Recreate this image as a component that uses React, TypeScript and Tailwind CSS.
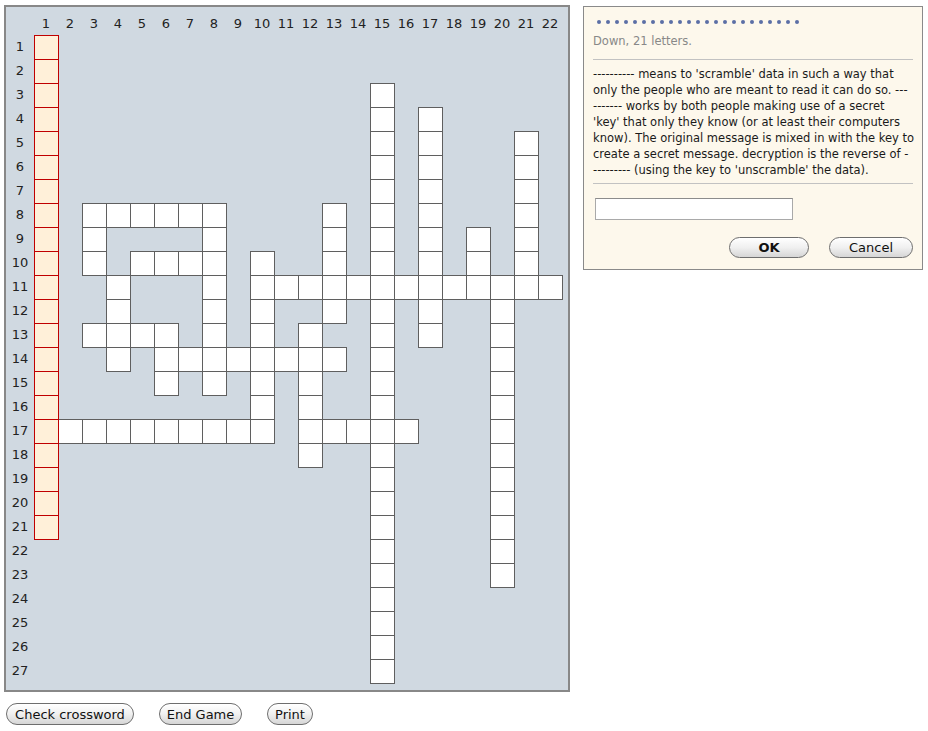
import React from "react";

const spec: Record<number, string> = {
  3: "15",
  4: "15,17",
  5: "15,17,21",
  6: "15,17,21",
  7: "15,17,21",
  8: "3-8,13,15,17,21",
  9: "3,8,13,15,17,19,21",
  10: "3,5-8,10,13,15,17,19,21",
  11: "4,8,10-22",
  12: "4,8,10,13,15,17,20",
  13: "3-6,8,10,12,15,17,20",
  14: "4,6-13,15,20",
  15: "6,8,10,12,15,20",
  16: "10,12,15,20",
  17: "2-10,12-16,20",
  18: "12,15,20",
  19: "15,20",
  20: "15,20",
  21: "15,20",
  22: "15,20",
  23: "15,20",
  24: "15",
  25: "15",
  26: "15",
  27: "15",
};

function parse(s: string): number[] {
  const out: number[] = [];
  s.split(",").forEach((p) => {
    if (p.includes("-")) {
      const [a, b] = p.split("-").map(Number);
      for (let i = a; i <= b; i++) out.push(i);
    } else out.push(Number(p));
  });
  return out;
}

type Cell = { r: number; c: number; hl: boolean };
const cells: Cell[] = [];
for (let r = 1; r <= 21; r++) cells.push({ r, c: 1, hl: true });
Object.entries(spec).forEach(([r, s]) => {
  parse(s).forEach((c) => cells.push({ r: Number(r), c, hl: false }));
});

const font = { fontFamily: '"DejaVu Sans", Verdana, sans-serif' };

function AquaButton({ children, className }: { children: React.ReactNode; className?: string }) {
  return (
    <div
      className={
        "flex items-center justify-center rounded-full border border-[#6e6e6e] bg-linear-to-b from-white via-[#f0f0f0] to-[#d6d6d6] text-[13px] leading-none text-[#111] shadow-[inset_0_1px_0_#fff] " +
        (className ?? "")
      }
    >
      {children}
    </div>
  );
}

export default function App() {
  const cols = Array.from({ length: 22 }, (_, i) => i + 1);
  const rows = Array.from({ length: 27 }, (_, i) => i + 1);
  const clueLines = [
    "---------- means to 'scramble' data in such a way that",
    "only the people who are meant to read it can do so. ---",
    "------- works by both people making use of a secret",
    "'key' that only they know (or at least their computers",
    "know). The original message is mixed in with the key to",
    "create a secret message. decryption is the reverse of -",
    "--------- (using the key to 'unscramble' the data).",
  ];
  return (
    <div className="relative w-[928px] h-[731px] bg-white text-[#222]" style={font}>
      <div className="flex items-start">
        <div className="ml-[4px] mt-[5px] flex flex-col">
          <div className="w-[566px] h-[687px] border-2 border-[#888] bg-[#d0d9e1]">
            <div className="grid grid-cols-[28px_repeat(22,24px)] grid-rows-[28px_repeat(27,24px)]">
              <div />
              {cols.map((c) => (
                <div
                  key={"h" + c}
                  className="flex h-[24px] items-center justify-center self-end pt-[1px] text-[13px] text-[#222]"
                  style={{ gridColumnStart: c + 1, gridRowStart: 1 }}
                >
                  {c}
                </div>
              ))}
              {rows.map((r) => (
                <div
                  key={"r" + r}
                  className="flex items-center justify-center text-[13px] text-[#222]"
                  style={{ gridColumnStart: 1, gridRowStart: r + 1 }}
                >
                  {r}
                </div>
              ))}
              {cells.map((cell) => (
                <div
                  key={cell.r + "-" + cell.c}
                  className={
                    "h-[25px] w-[25px] border " +
                    (cell.hl
                      ? "z-10 border-[#c00000] bg-[#fff0d9]"
                      : "border-[#5f5f5f] bg-white")
                  }
                  style={{ gridColumnStart: cell.c + 1, gridRowStart: cell.r + 1 }}
                />
              ))}
            </div>
          </div>
          <div className="mt-[11px] ml-[2px] flex gap-[25px]">
            <AquaButton className="h-[22px] w-[128px]">Check crossword</AquaButton>
            <AquaButton className="h-[22px] w-[83px]">End Game</AquaButton>
            <AquaButton className="h-[22px] w-[46px]">Print</AquaButton>
          </div>
        </div>
        <div className="ml-[13px] mt-[6px] w-[340px] h-[264px] border border-[#8a8a8a] bg-[#fdf8ec] px-[9px] pt-[9px]">
          <div className="flex h-[12px] items-center gap-[5px] pl-[4px]">
            {Array.from({ length: 23 }, (_, i) => (
              <span key={i} className="block h-[4px] w-[4px] rounded-full bg-[#5b6fa6]" />
            ))}
          </div>
          <div className="mt-[5px] text-[11.5px] leading-[16px] text-[#888]">Down, 21 letters.</div>
          <div className="mt-[10px] border-t border-[#c2c2c2]" />
          <div className="mt-[6px] text-[11.5px] leading-[16px] text-[#1a1a1a]">
            {clueLines.map((l, i) => (
              <div key={i} className="whitespace-nowrap">
                {l}
              </div>
            ))}
          </div>
          <div className="mt-[5px] border-t border-[#c2c2c2]" />
          <div className="mt-[14px] ml-[2px] h-[22px] w-[198px] border border-[#a9a9a9] border-t-[#8c8c8c] bg-white" />
          <div className="mt-[17px] flex justify-end gap-[20px]">
            <AquaButton className="h-[21px] w-[80px] font-bold">OK</AquaButton>
            <AquaButton className="h-[21px] w-[84px]">Cancel</AquaButton>
          </div>
        </div>
      </div>
    </div>
  );
}
